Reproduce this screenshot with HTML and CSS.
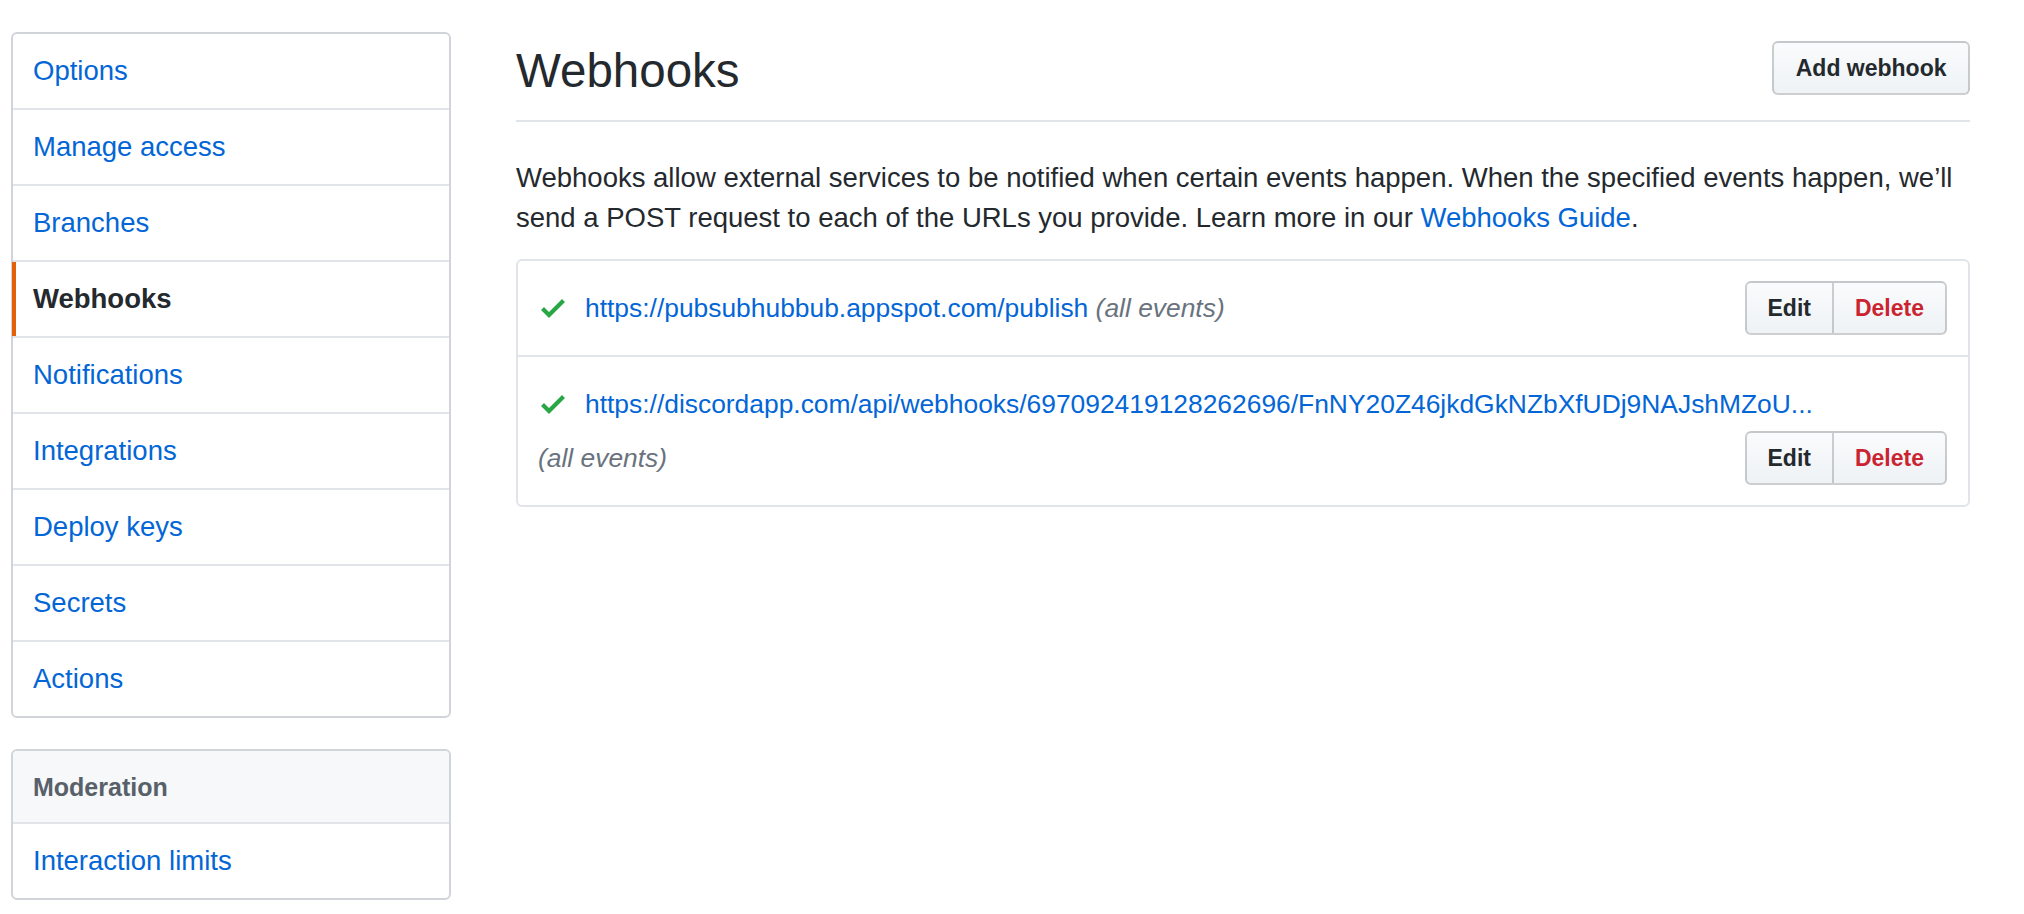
FILE: index.html
```html
<!DOCTYPE html>
<html lang="en">
<head>
<meta charset="utf-8">
<title>Webhooks · Settings</title>
<link rel="stylesheet" href="styles.css">
</head>
<body>
<div class="layout">
  <nav class="sidebar">
    <ul class="menu">
      <li><a class="menu-item" href="#">Options</a></li>
      <li><a class="menu-item" href="#">Manage access</a></li>
      <li><a class="menu-item" href="#">Branches</a></li>
      <li><a class="menu-item selected" href="#">Webhooks</a></li>
      <li><a class="menu-item" href="#">Notifications</a></li>
      <li><a class="menu-item" href="#">Integrations</a></li>
      <li><a class="menu-item" href="#">Deploy keys</a></li>
      <li><a class="menu-item" href="#">Secrets</a></li>
      <li><a class="menu-item" href="#">Actions</a></li>
    </ul>
    <div class="menu">
      <h3 class="menu-heading">Moderation</h3>
      <a class="menu-item" href="#">Interaction limits</a>
    </div>
  </nav>

  <main class="content">
    <div class="subhead">
      <h2 class="subhead-heading">Webhooks</h2>
      <div class="subhead-actions"><a class="btn" href="#">Add webhook</a></div>
    </div>

    <p class="intro">Webhooks allow external services to be notified when certain events happen. When the specified events happen, we’ll send a POST request to each of the URLs you provide. Learn more in our <a href="#">Webhooks Guide</a>.</p>

    <ul class="hook-list">
      <li class="hook-item">
        <div class="hook-line">
          <svg class="check" viewBox="0 0 12 16" aria-hidden="true"><path fill-rule="evenodd" d="M12 5l-8 8-4-4 1.5-1.5L4 10l6.5-6.5L12 5z"/></svg>
          <span class="hook-text"><a class="hook-url" href="#">https://pubsubhubbub.appspot.com/publish</a> <span class="hook-desc">(all events)</span></span>
          <div class="btn-group">
            <a class="btn btn-edit" href="#">Edit</a><a class="btn btn-danger" href="#">Delete</a>
          </div>
        </div>
      </li>
      <li class="hook-item">
        <div class="hook-line">
          <svg class="check" viewBox="0 0 12 16" aria-hidden="true"><path fill-rule="evenodd" d="M12 5l-8 8-4-4 1.5-1.5L4 10l6.5-6.5L12 5z"/></svg>
          <a class="hook-url" href="#">https://discordapp.com/api/webhooks/697092419128262696/FnNY20Z46jkdGkNZbXfUDj9NAJshMZoU...</a>
        </div>
        <div class="hook-line">
          <span class="hook-desc">(all events)</span>
          <div class="btn-group">
            <a class="btn btn-edit" href="#">Edit</a><a class="btn btn-danger" href="#">Delete</a>
          </div>
        </div>
      </li>
    </ul>
  </main>
</div>
</body>
</html>
```

FILE: styles.css
```css
* {
  box-sizing: border-box;
}

html,
body {
  margin: 0;
  padding: 0;
  background: #ffffff;
}

body {
  font-family: "Liberation Sans", Arial, sans-serif;
  font-size: 27.5px;
  line-height: 40px;
  color: #24292e;
}

a {
  color: #0366d6;
  text-decoration: none;
}

.layout {
  display: grid;
  grid-template-columns: 440px 1454px;
  column-gap: 65px;
  padding: 32px 0 0 11px;
}

/* ---------- sidebar ---------- */

.sidebar {
  display: flex;
  flex-direction: column;
  gap: 31px;
}

.menu {
  list-style: none;
  margin: 0;
  padding: 0;
  background: #ffffff;
  border: 2px solid #d1d5da;
  border-radius: 6px;
}

.menu-item {
  position: relative;
  display: block;
  padding: 17px 20px;
  line-height: 40px;
  color: #0366d6;
  border-top: 2px solid #e1e4e8;
}

.menu > li:first-child .menu-item {
  border-top: 0;
}

.menu-item.selected {
  color: #24292e;
  font-weight: bold;
}

.menu-item.selected::before {
  content: "";
  position: absolute;
  top: 0;
  bottom: 0;
  left: -1px;
  width: 4px;
  background: #e36209;
}

.menu-heading {
  margin: 0;
  padding: 16px 20px 15px;
  line-height: 40px;
  font-size: 25px;
  font-weight: bold;
  color: #586069;
  background: #f6f8fa;
  border-radius: 4px 4px 0 0;
}

/* ---------- content ---------- */

.subhead {
  display: flex;
  align-items: flex-start;
  padding-bottom: 17px;
  border-bottom: 2px solid #e1e4e8;
}

.subhead-heading {
  flex: 1;
  margin: 0;
  padding-top: 7px;
  font-size: 47.5px;
  line-height: 64px;
  font-weight: normal;
  color: #24292e;
}

.subhead-actions {
  margin: 9px 0 8px 8px;
}

.btn {
  display: inline-block;
  height: 54px;
  padding: 0 21.5px;
  font-size: 23px;
  line-height: 50px;
  font-weight: bold;
  color: #24292e;
  white-space: nowrap;
  background: linear-gradient(-180deg, #fafbfc 0%, #eff3f6 90%);
  border: 2px solid rgba(27, 31, 35, 0.2);
  border-radius: 6px;
}

.intro {
  margin: 36px 0 21px;
  font-size: 27.5px;
  line-height: 40px;
}

.hook-list {
  list-style: none;
  margin: 0;
  padding: 0;
  border: 2px solid #e1e4e8;
  border-radius: 6px;
}

.hook-item {
  padding: 20px 21px 20px 20px;
}

.hook-item + .hook-item {
  border-top: 2px solid #e1e4e8;
}

.hook-line {
  display: flex;
  align-items: center;
  min-height: 54px;
  font-size: 26.4px;
}

.check {
  flex: none;
  width: 24px;
  height: 32px;
  margin: 0 20px 0 3px;
  fill: #28a745;
}

.hook-url {
  color: #0366d6;
  white-space: nowrap;
}

.hook-desc {
  color: #6a737d;
  font-style: italic;
}

.btn-group {
  display: flex;
  margin-left: auto;
}

.btn-group .btn {
  padding: 0 21px;
  border-radius: 0;
}

.btn-group .btn:first-child {
  border-radius: 6px 0 0 6px;
}

.btn-group .btn:last-child {
  margin-left: -2px;
  border-radius: 0 6px 6px 0;
}

.btn-danger {
  color: #cb2431;
}
```
